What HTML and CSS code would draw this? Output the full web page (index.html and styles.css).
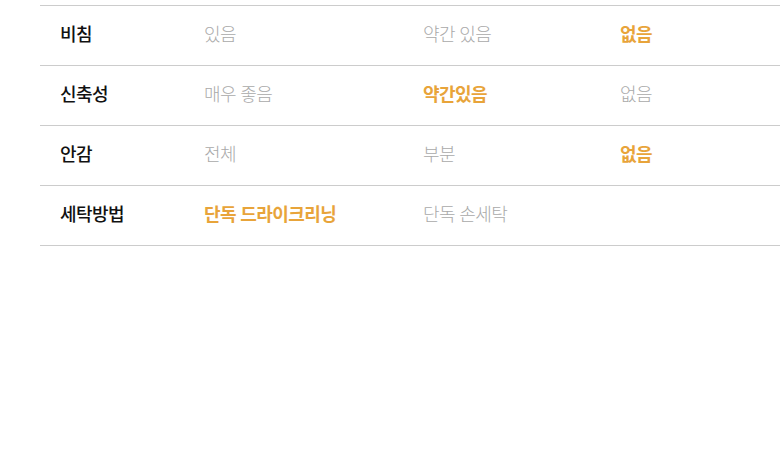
FILE: index.html
```html
<!DOCTYPE html>
<html lang="ko">
<head>
<meta charset="utf-8">
<link rel="stylesheet" href="styles.css">
</head>
<body>
<div class="spec">
  <div class="row">
    <div class="label">비침</div>
    <div class="opt">있음</div>
    <div class="opt">약간 있음</div>
    <div class="opt on">없음</div>
  </div>
  <div class="row">
    <div class="label">신축성</div>
    <div class="opt">매우 좋음</div>
    <div class="opt on">약간있음</div>
    <div class="opt">없음</div>
  </div>
  <div class="row">
    <div class="label">안감</div>
    <div class="opt">전체</div>
    <div class="opt">부분</div>
    <div class="opt on">없음</div>
  </div>
  <div class="row">
    <div class="label">세탁방법</div>
    <div class="opt on">단독 드라이크리닝</div>
    <div class="opt">단독 손세탁</div>
    <div class="opt"></div>
  </div>
</div>
</body>
</html>
```
FILE: styles.css
```css
html, body {
  margin: 0;
  padding: 0;
  background: #fff;
}
body {
  font-family: "Noto Sans CJK KR", "Noto Sans", sans-serif;
  font-size: 18px;
  letter-spacing: -0.6px;
  line-height: 24px;
}
.spec {
  margin: 5px 0 0 40px;
  border-top: 1px solid #cccccc;
}
.row {
  display: grid;
  grid-template-columns: 144px 219px 197px 1fr;
  height: 60px;
  box-sizing: border-box;
  padding-bottom: 5px;
  align-items: center;
  border-bottom: 1px solid #cccccc;
}
.row > div {
  padding-left: 20px;
}
.label {
  color: #111;
  font-weight: 500;
}
.opt {
  color: #a9a9a9;
  font-weight: 300;
}
.opt.on {
  color: #e8a43a;
  font-weight: 700;
}
```
